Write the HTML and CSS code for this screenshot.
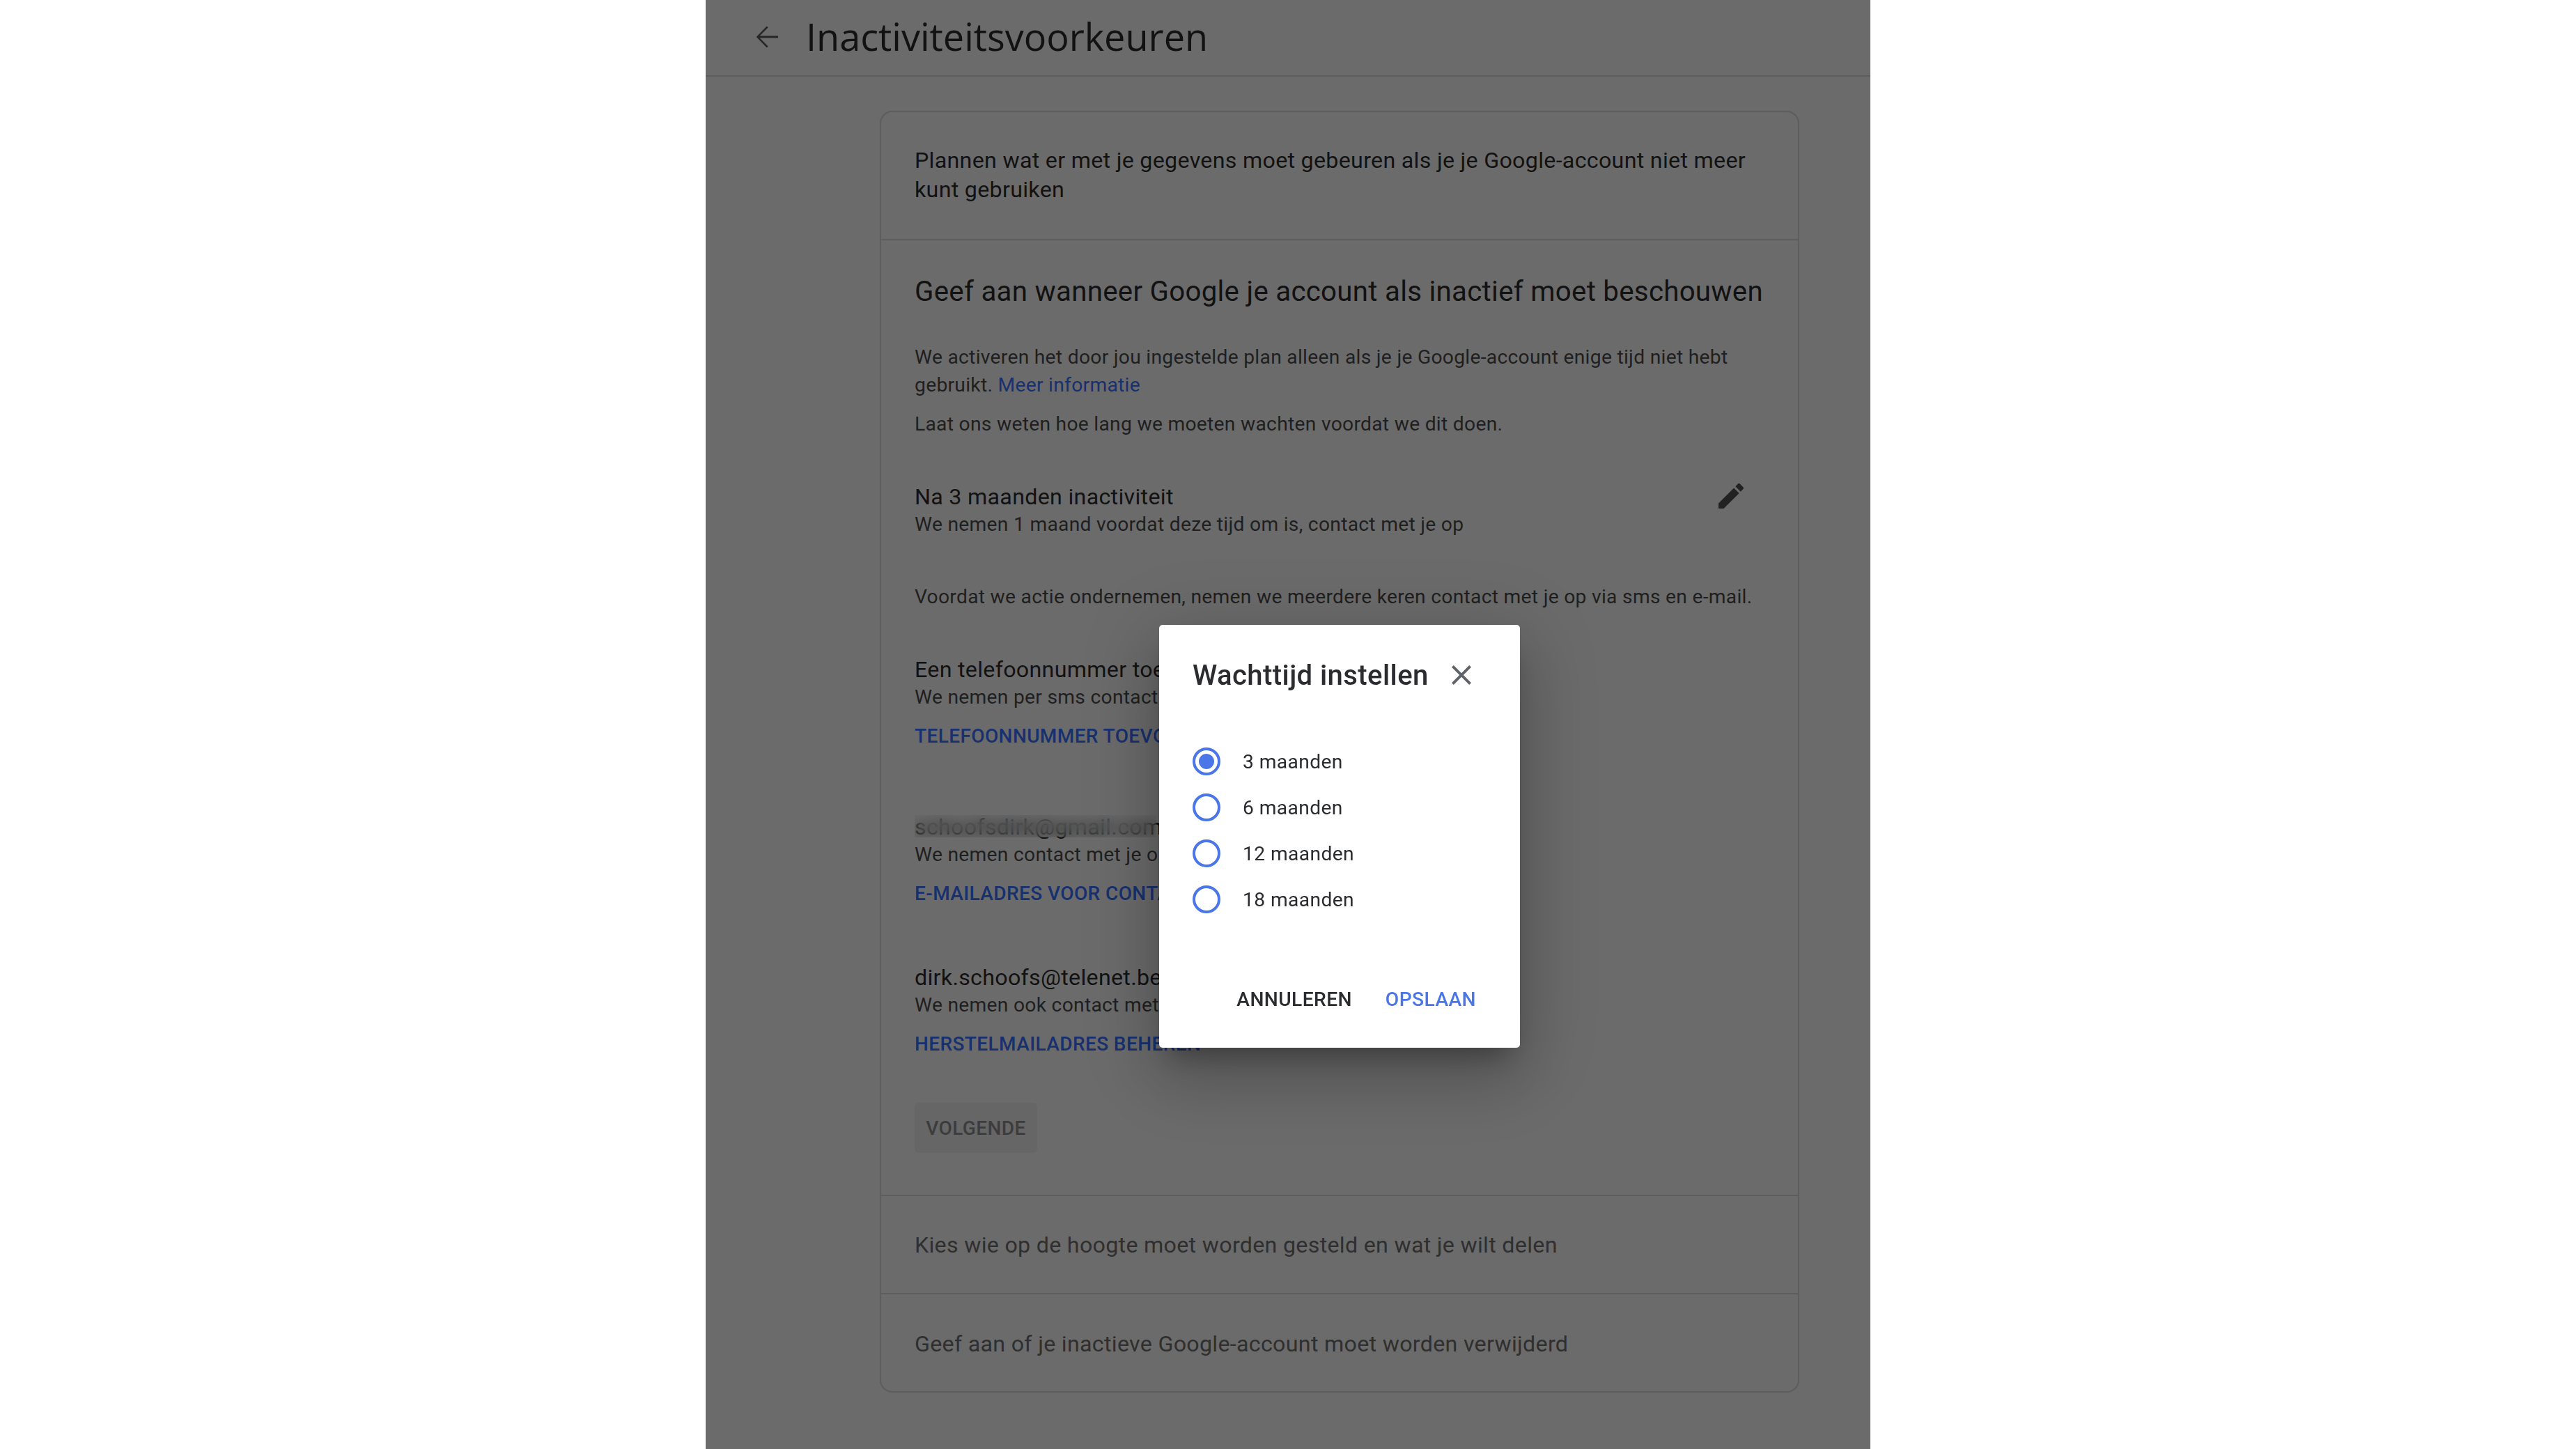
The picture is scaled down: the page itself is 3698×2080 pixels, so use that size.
FILE: index.html
```html
<!DOCTYPE html>
<html lang="nl">
<head>
<meta charset="utf-8">
<title>Inactiviteitsvoorkeuren</title>
<link rel="stylesheet" href="styles.css">
</head>
<body>
<div class="screen">
  <header class="topbar">
    <svg class="back" viewBox="0 0 24 24"><path d="M20 11.3H6.8l6-6-.9-1L4.4 12l7.5 7.7.9-1-6-6H20z"/></svg>
    <h1 class="page-title">Inactiviteitsvoorkeuren</h1>
  </header>
  <main class="card">
    <section class="intro">
      <p class="intro-text">Plannen wat er met je gegevens moet gebeuren als je je Google-account niet meer kunt gebruiken</p>
    </section>
    <section class="step">
      <h2 class="step-title">Geef aan wanneer Google je account als inactief moet beschouwen</h2>
      <p class="para para-first">We activeren het door jou ingestelde plan alleen als je je Google-account enige tijd niet hebt gebruikt. <a class="inline-link">Meer informatie</a></p>
      <p class="para para-tight">Laat ons weten hoe lang we moeten wachten voordat we dit doen.</p>
      <div class="wait-row">
        <div>
          <div class="item-title">Na 3 maanden inactiviteit</div>
          <div class="para">We nemen 1 maand voordat deze tijd om is, contact met je op</div>
        </div>
        <svg class="edit" viewBox="0 0 24 24"><path d="M3 17.25V21h3.75L17.81 9.94l-3.75-3.75L3 17.25zM20.71 7.04c.39-.39.39-1.02 0-1.41l-2.34-2.34a.9959.9959 0 00-1.41 0l-1.83 1.83 3.75 3.75 1.83-1.83z"/></svg>
      </div>
      <p class="para para-block">Voordat we actie ondernemen, nemen we meerdere keren contact met je op via sms en e-mail.</p>
      <div class="contact contact-phone">
        <div class="item-title">Een telefoonnummer toevoegen</div>
        <div class="para">We nemen per sms contact met je op</div>
        <a class="action">TELEFOONNUMMER TOEVOEGEN</a>
      </div>
      <div class="contact contact-mail">
        <div class="item-title redacted">schoofsdirk@gmail.com<span class="blur-box"></span></div>
        <div class="para">We nemen contact met je op via e-mail</div>
        <a class="action">E-MAILADRES VOOR CONTACT TOEVOEGEN</a>
      </div>
      <div class="contact contact-recovery">
        <div class="item-title">dirk.schoofs@telenet.be</div>
        <div class="para">We nemen ook contact met je op via dit adres</div>
        <a class="action">HERSTELMAILADRES BEHEREN</a>
      </div>
      <div class="next-btn">VOLGENDE</div>
    </section>
    <section class="collapsed">Kies wie op de hoogte moet worden gesteld en wat je wilt delen</section>
    <section class="collapsed">Geef aan of je inactieve Google-account moet worden verwijderd</section>
  </main>

  <div class="dialog">
    <div class="dialog-head">
      <span class="dialog-title">Wachttijd instellen</span>
      <svg class="close" viewBox="0 0 24 24"><path d="M19 6.41L17.59 5 12 10.59 6.41 5 5 6.41 10.59 12 5 17.59 6.41 19 12 13.41 17.59 19 19 17.59 13.41 12z"/></svg>
    </div>
    <div class="options">
      <div class="option"><span class="radio radio-on"></span><span>3 maanden</span></div>
      <div class="option"><span class="radio"></span><span>6 maanden</span></div>
      <div class="option"><span class="radio"></span><span>12 maanden</span></div>
      <div class="option"><span class="radio"></span><span>18 maanden</span></div>
    </div>
    <div class="dialog-actions">
      <span class="btn-cancel">ANNULEREN</span>
      <span class="btn-save">OPSLAAN</span>
    </div>
  </div>
</div>
</body>
</html>
```
FILE: styles.css
```css
* { box-sizing: border-box; }
html, body { margin: 0; padding: 0; background: #fff; }
body { width: 3698px; height: 2080px; overflow: hidden; font-family: Roboto, "Liberation Sans", sans-serif; }
p, h1, h2 { margin: 0; font-weight: 400; }

.screen { position: relative; width: 1672px; height: 2080px; margin: 0 auto; background: #6b6b6b; overflow: hidden; color: #121212; }

.topbar { display: flex; align-items: center; height: 110px; padding-left: 64px; border-bottom: 2px solid #5d5d5d; }
.back { width: 48px; height: 48px; fill: #262626; flex: none; margin-bottom: 2px; }
.page-title { margin-left: 32px; font-family: "Open Sans", Roboto, sans-serif; font-size: 54px; line-height: 60px; color: #121212; margin-top: -4px; }

.card { width: 1320px; height: 1840px; margin: 49px 0 0 250px; border: 2px solid #5d5d5d; border-radius: 18px; }

.intro { padding: 48px 48px 50px; border-bottom: 2px solid #5d5d5d; }
.intro-text { font-size: 32.2px; line-height: 42px; letter-spacing: 0.3px; }

.step { padding: 49px 48px 60px; border-bottom: 2px solid #5d5d5d; }
.step-title { font-size: 40.2px; line-height: 50px; letter-spacing: 0.3px; }

.para { font-size: 28.2px; line-height: 40px; letter-spacing: 0.3px; color: #1f1f1f; }
.para-first { margin-top: 49px; }
.para-tight { margin-top: 16px; }
.para-block { margin-top: 64px; }
.inline-link { color: #17306f; }

.wait-row { display: flex; justify-content: space-between; align-items: flex-start; margin-top: 64px; padding-right: 24px; }
.edit { width: 48px; height: 48px; fill: #222; margin-top: -5px; flex: none; }

.item-title { font-size: 32.2px; line-height: 40px; letter-spacing: 0.3px; }
.contact-phone { margin-top: 64px; }
.contact-mail { margin-top: 90px; }
.contact-recovery { margin-top: 80px; }
.redacted { position: relative; }
.blur-box { position: absolute; left: 0; top: 3px; width: 347px; height: 32px; backdrop-filter: blur(10px); }

.action { display: block; margin-top: 16px; font-size: 28px; line-height: 40px; font-weight: 500; letter-spacing: 0.4px; color: #17306f; white-space: nowrap; }

.next-btn { display: flex; align-items: center; justify-content: center; width: 176px; height: 72px; margin-top: 64px; border-radius: 6px; background: #666; color: #3c3c3c; font-size: 28px; font-weight: 500; letter-spacing: 0.4px; }

.collapsed { display: flex; align-items: center; height: 141px; padding-left: 48px; font-size: 32.2px; letter-spacing: 0.3px; color: #2f2f2f; border-bottom: 2px solid #5d5d5d; }
.collapsed:last-child { border-bottom: 0; }

.dialog { position: absolute; left: 651px; top: 897px; width: 518px; height: 607px; padding: 48px 48px 0; background: #fff; border-radius: 5px; color: #2b2c2f; box-shadow: 0 26px 36px -16px rgba(0,0,0,.3), 0 48px 90px 8px rgba(0,0,0,.14), 0 18px 110px 16px rgba(0,0,0,.12); }
.dialog-head { display: flex; align-items: center; height: 48px; }
.dialog-title { font-size: 40.1px; font-weight: 500; letter-spacing: 0.4px; white-space: nowrap; }
.close { width: 48px; height: 48px; fill: #5f6368; margin-left: auto; margin-right: 12px; flex: none; }

.options { margin-top: 67px; }
.option { display: flex; align-items: center; height: 66px; font-size: 28.2px; letter-spacing: 0.4px; }
.radio { flex: none; display: flex; align-items: center; justify-content: center; width: 40px; height: 40px; margin-right: 32px; border: 4px solid #4a76e8; border-radius: 50%; }
.radio-on::after { content: ""; width: 22px; height: 22px; border-radius: 50%; background: #4a76e8; }

.dialog-actions { display: flex; justify-content: flex-end; align-items: center; gap: 48px; margin-top: 90px; padding-right: 15px; font-size: 28.2px; font-weight: 500; letter-spacing: 0.4px; height: 40px; }
.btn-save { color: #4a76e8; }
```
